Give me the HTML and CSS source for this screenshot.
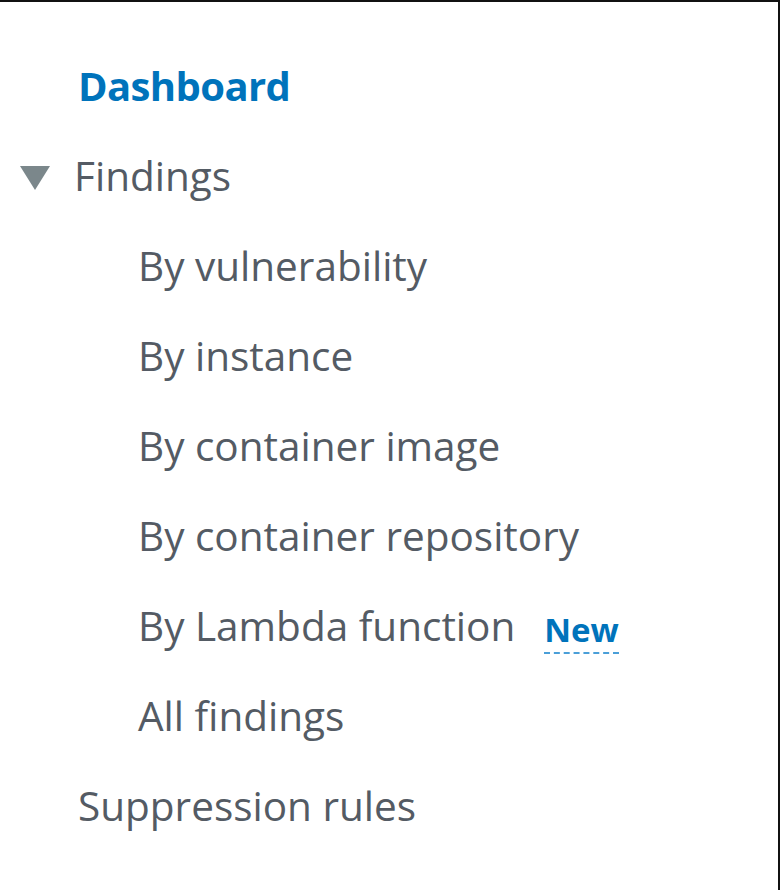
FILE: index.html
```html
<!DOCTYPE html>
<html>
<head>
<meta charset="utf-8">
<link rel="stylesheet" href="styles.css">
</head>
<body>
<nav class="panel">
  <ul class="nav">
    <li class="item top active">Dashboard</li>
    <li class="item section">
      <svg class="caret" width="30" height="24" viewBox="0 0 30 24"><polygon points="0,0 30,0 15,24" fill="#7b878b"/></svg>
      <span>Findings</span>
    </li>
    <li class="item sub">By vulnerability</li>
    <li class="item sub">By instance</li>
    <li class="item sub">By container image</li>
    <li class="item sub">By container repository</li>
    <li class="item sub">By Lambda function <span class="badge">New</span></li>
    <li class="item sub">All findings</li>
    <li class="item top">Suppression rules</li>
  </ul>
</nav>
</body>
</html>
```
FILE: styles.css
```css
html, body {
  margin: 0;
  padding: 0;
  background: #fff;
}
.panel {
  box-sizing: border-box;
  width: 780px;
  height: 890px;
  border-top: 2px solid #111;
  border-right: 2px solid #111;
  padding-top: 39px;
  font-family: "Open Sans", "Noto Sans", sans-serif;
  color: #545b64;
}
.nav {
  list-style: none;
  margin: 0;
  padding: 0;
}
.item {
  height: 90px;
  line-height: 90px;
  font-size: 40.5px;
  display: flex;
  align-items: center;
}
.top {
  padding-left: 78px;
}
.active {
  color: #0073bb;
  font-weight: 700;
  font-size: 40px;
  letter-spacing: -0.6px;
}
.section {
  padding-left: 20px;
}
.caret {
  margin-right: 24px;
  margin-top: 4px;
}
.sub {
  padding-left: 138px;
}
.badge {
  margin-left: 29px;
  font-size: 33px;
  font-weight: 700;
  color: #0073bb;
  line-height: 1.2;
  border-bottom: 2px dashed #4a9fd8;
  padding-bottom: 2px;
  margin-top: 12px;
}
```
